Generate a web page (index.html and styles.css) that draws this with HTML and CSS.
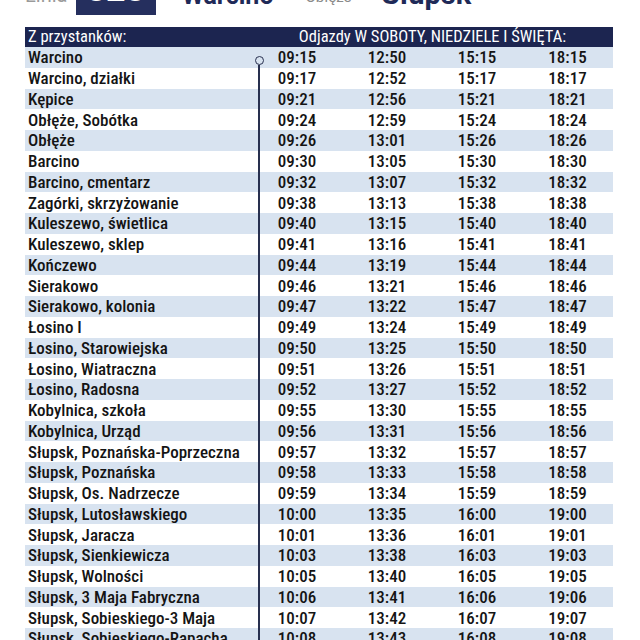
FILE: index.html
```html
<!DOCTYPE html>
<html lang="pl">
<head>
<meta charset="utf-8">
<title>Rozkład jazdy – linia 828</title>
<link rel="stylesheet" href="styles.css">
</head>
<body>
<header class="top">
  <span class="linia">Linia</span>
  <span class="num"><span class="num-txt">828</span></span>
  <span class="from">Warcino</span>
  <span class="via">Obłęże</span>
  <span class="to">Słupsk</span>
</header>

<section class="table">
  <div class="hdr">
    <div class="hdr-stops">Z przystanków:</div>
    <div class="hdr-days">Odjazdy W SOBOTY, NIEDZIELE I ŚWIĘTA:</div>
  </div>
  <div class="body">
    <div class="route"><span class="dot"></span><span class="line"></span></div>
    <div class="row"><span class="stop">Warcino</span><span class="t">09:15</span><span class="t">12:50</span><span class="t">15:15</span><span class="t">18:15</span></div>
    <div class="row"><span class="stop">Warcino, działki</span><span class="t">09:17</span><span class="t">12:52</span><span class="t">15:17</span><span class="t">18:17</span></div>
    <div class="row"><span class="stop">Kępice</span><span class="t">09:21</span><span class="t">12:56</span><span class="t">15:21</span><span class="t">18:21</span></div>
    <div class="row"><span class="stop">Obłęże, Sobótka</span><span class="t">09:24</span><span class="t">12:59</span><span class="t">15:24</span><span class="t">18:24</span></div>
    <div class="row"><span class="stop">Obłęże</span><span class="t">09:26</span><span class="t">13:01</span><span class="t">15:26</span><span class="t">18:26</span></div>
    <div class="row"><span class="stop">Barcino</span><span class="t">09:30</span><span class="t">13:05</span><span class="t">15:30</span><span class="t">18:30</span></div>
    <div class="row"><span class="stop">Barcino, cmentarz</span><span class="t">09:32</span><span class="t">13:07</span><span class="t">15:32</span><span class="t">18:32</span></div>
    <div class="row"><span class="stop">Zagórki, skrzyżowanie</span><span class="t">09:38</span><span class="t">13:13</span><span class="t">15:38</span><span class="t">18:38</span></div>
    <div class="row"><span class="stop">Kuleszewo, świetlica</span><span class="t">09:40</span><span class="t">13:15</span><span class="t">15:40</span><span class="t">18:40</span></div>
    <div class="row"><span class="stop">Kuleszewo, sklep</span><span class="t">09:41</span><span class="t">13:16</span><span class="t">15:41</span><span class="t">18:41</span></div>
    <div class="row"><span class="stop">Kończewo</span><span class="t">09:44</span><span class="t">13:19</span><span class="t">15:44</span><span class="t">18:44</span></div>
    <div class="row"><span class="stop">Sierakowo</span><span class="t">09:46</span><span class="t">13:21</span><span class="t">15:46</span><span class="t">18:46</span></div>
    <div class="row"><span class="stop">Sierakowo, kolonia</span><span class="t">09:47</span><span class="t">13:22</span><span class="t">15:47</span><span class="t">18:47</span></div>
    <div class="row"><span class="stop">Łosino I</span><span class="t">09:49</span><span class="t">13:24</span><span class="t">15:49</span><span class="t">18:49</span></div>
    <div class="row"><span class="stop">Łosino, Starowiejska</span><span class="t">09:50</span><span class="t">13:25</span><span class="t">15:50</span><span class="t">18:50</span></div>
    <div class="row"><span class="stop">Łosino, Wiatraczna</span><span class="t">09:51</span><span class="t">13:26</span><span class="t">15:51</span><span class="t">18:51</span></div>
    <div class="row"><span class="stop">Łosino, Radosna</span><span class="t">09:52</span><span class="t">13:27</span><span class="t">15:52</span><span class="t">18:52</span></div>
    <div class="row"><span class="stop">Kobylnica, szkoła</span><span class="t">09:55</span><span class="t">13:30</span><span class="t">15:55</span><span class="t">18:55</span></div>
    <div class="row"><span class="stop">Kobylnica, Urząd</span><span class="t">09:56</span><span class="t">13:31</span><span class="t">15:56</span><span class="t">18:56</span></div>
    <div class="row"><span class="stop">Słupsk, Poznańska-Poprzeczna</span><span class="t">09:57</span><span class="t">13:32</span><span class="t">15:57</span><span class="t">18:57</span></div>
    <div class="row"><span class="stop">Słupsk, Poznańska</span><span class="t">09:58</span><span class="t">13:33</span><span class="t">15:58</span><span class="t">18:58</span></div>
    <div class="row"><span class="stop">Słupsk, Os. Nadrzecze</span><span class="t">09:59</span><span class="t">13:34</span><span class="t">15:59</span><span class="t">18:59</span></div>
    <div class="row"><span class="stop">Słupsk, Lutosławskiego</span><span class="t">10:00</span><span class="t">13:35</span><span class="t">16:00</span><span class="t">19:00</span></div>
    <div class="row"><span class="stop">Słupsk, Jaracza</span><span class="t">10:01</span><span class="t">13:36</span><span class="t">16:01</span><span class="t">19:01</span></div>
    <div class="row"><span class="stop">Słupsk, Sienkiewicza</span><span class="t">10:03</span><span class="t">13:38</span><span class="t">16:03</span><span class="t">19:03</span></div>
    <div class="row"><span class="stop">Słupsk, Wolności</span><span class="t">10:05</span><span class="t">13:40</span><span class="t">16:05</span><span class="t">19:05</span></div>
    <div class="row"><span class="stop">Słupsk, 3 Maja Fabryczna</span><span class="t">10:06</span><span class="t">13:41</span><span class="t">16:06</span><span class="t">19:06</span></div>
    <div class="row"><span class="stop">Słupsk, Sobieskiego-3 Maja</span><span class="t">10:07</span><span class="t">13:42</span><span class="t">16:07</span><span class="t">19:07</span></div>
    <div class="row"><span class="stop">Słupsk, Sobieskiego-Rapacha</span><span class="t">10:08</span><span class="t">13:43</span><span class="t">16:08</span><span class="t">19:08</span></div>
  </div>
</section>
</body>
</html>
```
FILE: styles.css
```css
html, body {
  margin: 0;
  padding: 0;
  background: #ffffff;
}
body {
  font-family: "Roboto", "Open Sans", "DejaVu Sans Condensed", sans-serif;
  color: #141414;
}

/* ---------- top header (mostly cut off) ---------- */
.top {
  display: flex;
  align-items: flex-end;
  height: 15px;
  padding-left: 25px;
  margin-bottom: 12px;
}
.top > span {
  line-height: 1;
  white-space: nowrap;
}
.linia {
  font-size: 20px;
  color: #9a9a9a;
  margin-bottom: 10px;
}
.num {
  display: flex;
  align-items: flex-end;
  height: 50px;
  margin-left: 9px;
  padding: 0 11px 9px 10px;
  box-sizing: border-box;
  background: #252f5e;
}
.num-txt {
  font-size: 34px;
  font-weight: 700;
  color: #ffffff;
  line-height: 1;
}
.from, .to {
  font-weight: 700;
  color: #1f2a58;
}
.from {
  font-size: 25px;
  margin-left: 26px;
  margin-bottom: 7px;
}
.via {
  font-size: 15px;
  color: #8a8a8a;
  margin-left: 32px;
  margin-bottom: 10px;
}
.to {
  font-size: 29px;
  margin-left: 30px;
  margin-bottom: 6px;
}

/* ---------- timetable ---------- */
.table {
  width: 588px;
  margin-left: 25px;
  font-stretch: 75%;
}
.hdr {
  display: grid;
  grid-template-columns: 227px 1fr;
  align-items: center;
  height: 20px;
  background: #1c2550;
  color: #ffffff;
  font-size: 16.5px;
  font-weight: 450;
  line-height: 20px;
}
.hdr-stops {
  padding-left: 3px;
}
.hdr-days {
  text-align: center;
}
.body {
  position: relative;
}
.row {
  display: grid;
  grid-template-columns: 227px 90px 90px 90px 91px;
  align-items: center;
  height: 20.75px;
  font-size: 17px;
  font-weight: 500;
  line-height: 20px;
}
.row:nth-child(even) {
  background: #d8e3f0;
}
.stop {
  padding-left: 3px;
  white-space: nowrap;
}
.t {
  text-align: center;
}

/* route line overlay */
.route {
  position: absolute;
  left: 229px;
  top: 8px;
  bottom: 0;
  width: 10px;
  z-index: 1;
}
.dot {
  position: absolute;
  left: 0.5px;
  top: 0.5px;
  width: 9px;
  height: 9px;
  box-sizing: border-box;
  border: 1.7px solid #28304f;
  border-radius: 50%;
}
.line {
  position: absolute;
  left: 4px;
  top: 9.5px;
  bottom: 0;
  width: 2px;
  background: #28304f;
}
```
